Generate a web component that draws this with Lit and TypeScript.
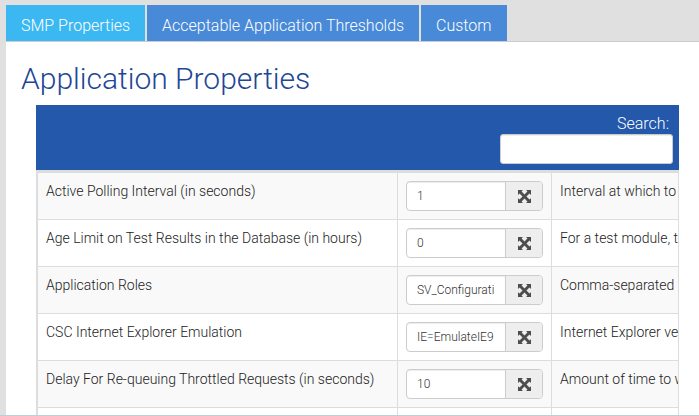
import { LitElement, html, css } from "lit";
import { customElement } from "lit/decorators.js";

const tabs = ["SMP Properties", "Acceptable Application Thresholds", "Custom"];

const rows = [
  ["Active Polling Interval (in seconds)", "1", "Interval at which to"],
  ["Age Limit on Test Results in the Database (in hours)", "0", "For a test module, the"],
  ["Application Roles", "SV_Configuration", "Comma-separated"],
  ["CSC Internet Explorer Emulation", "IE=EmulateIE9", "Internet Explorer version"],
  ["Delay For Re-queuing Throttled Requests (in seconds)", "10", "Amount of time to wait"],
];

@customElement("app-root")
export class AppRoot extends LitElement {
  static styles = css`
    :host {
      display: block;
      box-sizing: border-box;
      height: 416px;
      overflow: hidden;
      background: #e0e0e0;
      padding: 5px 0 0 6px;
      border-bottom: 1px solid #b9cfe0;
      font: 300 14px/20px Roboto, "Liberation Sans", sans-serif;
      color: #222;
    }
    * { box-sizing: border-box; }
    .tabs { display: grid; grid-template: 36px / 139px 272px 86px; gap: 2px; height: 36px; }
    .tab {
      height: 36px;
      background: #4889d8;
      color: #fff;
      font-size: 16px;
      line-height: 41px;
      padding-left: 15px;
      white-space: nowrap;
      overflow: hidden;
    }
    .tab.active { background: #3bb8f2; }
    .panel { background: #fff; border-top: 1px solid #ccc; height: 374px; padding: 17px 20px 0 15px; overflow: hidden; }
    h1 { margin: 0; height: 46px; font-size: 30px; line-height: 40px; font-weight: 300; color: #1f4796; white-space: nowrap; }
    .props { margin-left: 15px; }
    .header {
      height: 65px;
      background: #2358aa;
      color: #fff;
      padding: 9px 6px 0 0;
      display: flex;
      flex-direction: column;
      align-items: flex-end;
    }
    .label { font-size: 16px; line-height: 20px; padding-right: 4px; }
    .search { width: 173px; height: 30px; border: 1px solid #ccc; border-radius: 3px; background: #fff; box-shadow: inset 0 1px 1px #00000013; }
    .table { border: solid #ddd; border-width: 3px 1px 0 2px; }
    .row { display: grid; grid-template-columns: 359px 154px 1fr; height: 47px; border-bottom: 1px solid #ddd; background: #fff; }
    .row:nth-child(odd) { background: #f9f9f9; }
    .cell { padding: 8px 0 0 8px; white-space: nowrap; overflow: hidden; }
    .cell + .cell { border-left: 1px solid #ddd; }
    .group { display: flex; width: 137px; height: 30px; border: 1px solid #ccc; border-radius: 4px; overflow: hidden; background: #fff; }
    .value { width: 98px; padding-left: 10px; font-size: 12px; line-height: 28px; color: #333; box-shadow: inset 0 1px 1px #00000013; }
    .text { display: block; width: 77px; overflow: hidden; }
    .addon { flex: 1; border-left: 1px solid #ccc; background: #eee; display: flex; align-items: center; justify-content: center; }
    svg { display: block; fill: #4d4d4d; }
  `;

  render() {
    return html`
      <div class="tabs">
        ${tabs.map((t, i) => html`<div class="tab ${i === 0 ? "active" : ""}">${t}</div>`)}
      </div>
      <div class="panel">
        <h1>Application Properties</h1>
        <div class="props">
          <div class="header">
            <span class="label">Search:</span>
            <div class="search"></div>
          </div>
          <div class="table">
            ${rows.map(
              ([name, value, info]) => html`<div class="row">
                <div class="cell">${name}</div>
                <div class="cell">
                  <div class="group">
                    <div class="value"><span class="text">${value}</span></div>
                    <div class="addon">
                      <svg width="13" height="13" viewBox="0 0 12 12">
                        <path d="M0 0H4.5L3.3 1.4L6 4.2L8.7 1.4L7.5 0H12V4.5L10.6 3.3L7.8 6L10.6 8.7L12 7.5V12H7.5L8.7 10.6L6 7.8L3.3 10.6L4.5 12H0V7.5L1.4 8.7L4.2 6L1.4 3.3L0 4.5Z" />
                      </svg>
                    </div>
                  </div>
                </div>
                <div class="cell">${info}</div>
              </div>`
            )}
            <div class="row">
              <div class="cell"></div>
              <div class="cell"></div>
              <div class="cell"></div>
            </div>
          </div>
        </div>
      </div>
    `;
  }
}
